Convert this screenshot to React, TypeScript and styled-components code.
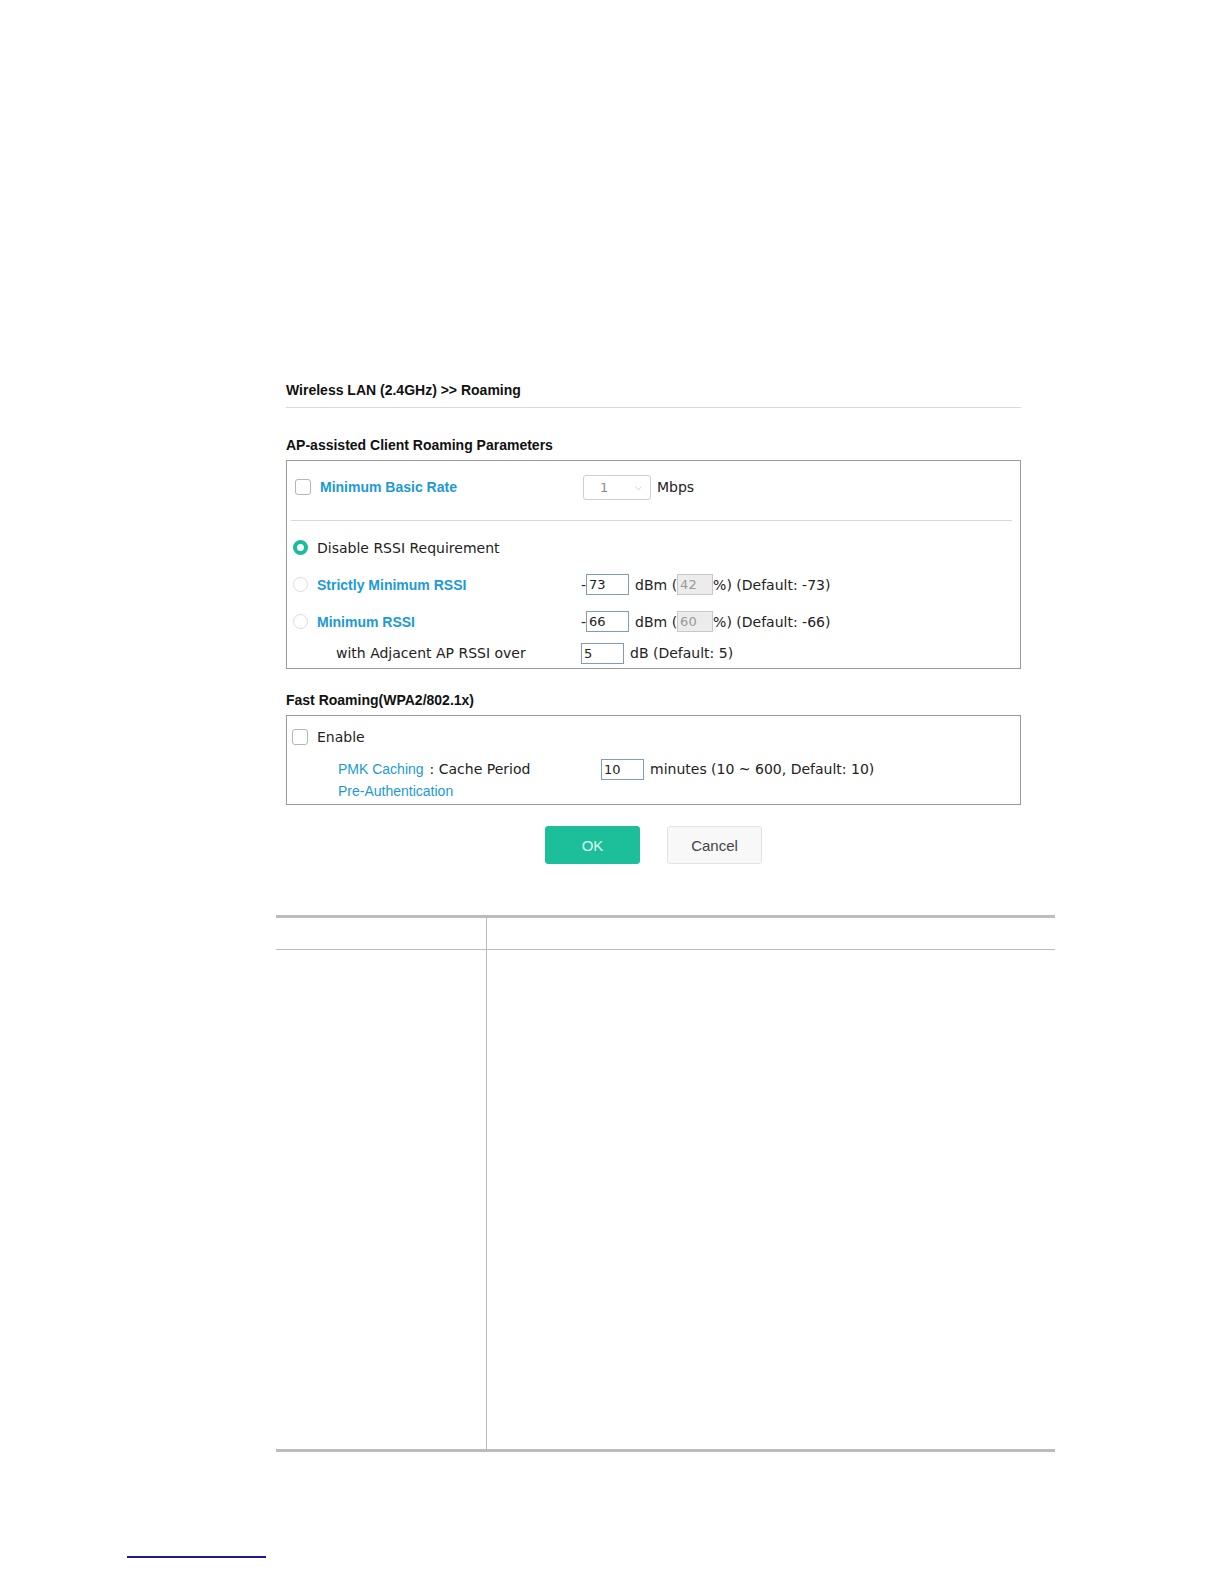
import React from 'react';
import styled, { createGlobalStyle } from 'styled-components';

const GlobalStyle = createGlobalStyle`
  body {
    margin: 0;
    background: #ffffff;
    font-family: "Liberation Sans", Arial, sans-serif;
    color: #222;
  }
`;

const Page = styled.div`
  width: 1224px;
  height: 1584px;
  padding: 380px 0 0 0;
  box-sizing: border-box;
  display: flex;
  flex-direction: column;
`;

const Panel = styled.div`
  margin-left: 286px;
  width: 735px;
  display: flex;
  flex-direction: column;
`;

const Title = styled.div`
  font-weight: bold;
  font-size: 14px;
  line-height: 20px;
  padding-bottom: 7px;
  border-bottom: 1px solid #d9d9d9;
  color: #111;
`;

const SectionTitle = styled.div<{ $top: number }>`
  font-weight: bold;
  font-size: 14px;
  line-height: 20px;
  margin-top: ${(p) => p.$top}px;
  margin-bottom: 5px;
  color: #111;
`;

const Box = styled.div<{ $height: number }>`
  border: 1px solid #9a9a9a;
  height: ${(p) => p.$height}px;
  box-sizing: border-box;
  display: flex;
  flex-direction: column;
`;

const Row = styled.div<{ $height: number; $indent?: number; $label?: number; $top?: number }>`
  display: grid;
  grid-template-columns: ${(p) => p.$label ?? 288}px 1fr;
  align-items: center;
  height: ${(p) => p.$height}px;
  margin-top: ${(p) => p.$top ?? 0}px;
  padding-left: ${(p) => p.$indent ?? 6}px;
`;

const LabelCell = styled.div<{ $pad?: number; $gap?: number }>`
  display: flex;
  align-items: center;
  gap: ${(p) => p.$gap ?? 9}px;
  padding-left: ${(p) => p.$pad ?? 0}px;
`;

const ValueCell = styled.div`
  display: flex;
  align-items: center;
  font-family: "DejaVu Sans", Verdana, sans-serif;
  font-size: 14px;
  color: #222;
`;

const Separator = styled.div`
  height: 1px;
  background: #d8d8d8;
  margin: 7px 8px 8px 4px;
`;

const Check = styled.span`
  width: 14px;
  height: 14px;
  border: 1px solid #b5b5b5;
  border-radius: 3px;
  background: #fff;
  flex-shrink: 0;
`;

const Radio = styled.span<{ $on?: boolean }>`
  width: ${(p) => (p.$on ? 7 : 13)}px;
  height: ${(p) => (p.$on ? 7 : 13)}px;
  border-radius: 50%;
  border: ${(p) => (p.$on ? '4px solid #1abc9c' : '1px solid #dcdcdc')};
  background: #fff;
  flex-shrink: 0;
`;

const BlueLabel = styled.span`
  color: #1b9ad6;
  font-weight: bold;
  font-size: 14px;
`;

const Text = styled.span`
  font-family: "DejaVu Sans", Verdana, sans-serif;
  font-size: 14px;
  color: #222;
`;

const LinkText = styled.span`
  color: #1b9ad6;
  font-size: 14px;
`;

const SelectBox = styled.div`
  width: 68px;
  height: 25px;
  border: 1px solid #cfcfcf;
  border-radius: 3px;
  box-sizing: border-box;
  display: flex;
  align-items: center;
  justify-content: space-between;
  padding: 0 8px 0 16px;
  color: #888;
  font-size: 13px;
  margin-right: 6px;
  font-family: "DejaVu Sans", Verdana, sans-serif;
`;

const Chevron = styled.span`
  font-size: 9px;
  color: #b0b0b0;
`;

const Field = styled.div<{ $width: number; $grey?: boolean }>`
  width: ${(p) => p.$width}px;
  height: 21px;
  box-sizing: border-box;
  border: 1px solid ${(p) => (p.$grey ? '#c8c8c8' : '#7f9db9')};
  background: ${(p) => (p.$grey ? '#ececec' : '#fff')};
  color: ${(p) => (p.$grey ? '#999' : '#222')};
  font-family: "DejaVu Sans", Verdana, sans-serif;
  font-size: 13px;
  line-height: 19px;
  padding-left: 2px;
  margin: 0 ${(p) => (p.$grey ? 0 : 6)}px 0 0;
`;

const Buttons = styled.div`
  display: flex;
  justify-content: center;
  gap: 27px;
  margin-top: 21px;
`;

const Button = styled.button<{ $primary?: boolean }>`
  width: 95px;
  height: 38px;
  border-radius: 3px;
  font-family: "Liberation Sans", Arial, sans-serif;
  font-size: 15px;
  border: 1px solid ${(p) => (p.$primary ? '#1dbf9b' : '#e2e2e2')};
  background: ${(p) => (p.$primary ? '#1dbf9b' : '#f8f8f8')};
  color: ${(p) => (p.$primary ? '#dff7f0' : '#444')};
  padding: 0;
`;

const Table = styled.div`
  margin: 51px 0 0 276px;
  width: 779px;
  border-top: 3px solid #bcbcbc;
  border-bottom: 3px solid #bcbcbc;
  display: grid;
  grid-template-columns: 211px 1fr;
  grid-template-rows: 32px 499px;
`;

const Cell = styled.div<{ $left?: boolean; $head?: boolean }>`
  border-right: ${(p) => (p.$left ? '1px solid #bcbcbc' : 'none')};
  border-bottom: ${(p) => (p.$head ? '1px solid #bcbcbc' : 'none')};
`;

const FootLine = styled.div`
  margin: 104px 0 0 127px;
  width: 139px;
  height: 2px;
  background: #1a1a9a;
`;

const App = () => {
  return (
    <Page>
      <GlobalStyle />
      <Panel>
        <Title>Wireless LAN (2.4GHz) &gt;&gt; Roaming</Title>
        <SectionTitle $top={27}>AP-assisted Client Roaming Parameters</SectionTitle>
        <Box $height={209}>
          <Row $height={52} $indent={8}>
            <LabelCell>
              <Check />
              <BlueLabel>Minimum Basic Rate</BlueLabel>
            </LabelCell>
            <ValueCell>
              <SelectBox>
                <span>1</span>
                <Chevron>⌵</Chevron>
              </SelectBox>
              Mbps
            </ValueCell>
          </Row>
          <Separator />
          <Row $height={37}>
            <LabelCell>
              <Radio $on />
              <Text>Disable RSSI Requirement</Text>
            </LabelCell>
          </Row>
          <Row $height={37}>
            <LabelCell>
              <Radio />
              <BlueLabel>Strictly Minimum RSSI</BlueLabel>
            </LabelCell>
            <ValueCell>
              -<Field $width={43}>73</Field>
              dBm (<Field $width={36} $grey>42</Field>
              %) (Default: -73)
            </ValueCell>
          </Row>
          <Row $height={37}>
            <LabelCell>
              <Radio />
              <BlueLabel>Minimum RSSI</BlueLabel>
            </LabelCell>
            <ValueCell>
              -<Field $width={43}>66</Field>
              dBm (<Field $width={36} $grey>60</Field>
              %) (Default: -66)
            </ValueCell>
          </Row>
          <Row $height={26}>
            <LabelCell $pad={43}>
              <Text>with Adjacent AP RSSI over</Text>
            </LabelCell>
            <ValueCell>
              <Field $width={43}>5</Field>
              dB (Default: 5)
            </ValueCell>
          </Row>
        </Box>
        <SectionTitle $top={21}>Fast Roaming(WPA2/802.1x)</SectionTitle>
        <Box $height={90}>
          <Row $height={22} $indent={5} $top={10}>
            <LabelCell>
              <Check />
              <Text>Enable</Text>
            </LabelCell>
          </Row>
          <Row $height={22} $indent={51} $label={263} $top={10}>
            <LabelCell $gap={6}>
              <LinkText>PMK Caching</LinkText>
              <Text>: Cache Period</Text>
            </LabelCell>
            <ValueCell>
              <Field $width={43}>10</Field>
              minutes (10 ~ 600, Default: 10)
            </ValueCell>
          </Row>
          <Row $height={22} $indent={51}>
            <LabelCell>
              <LinkText>Pre-Authentication</LinkText>
            </LabelCell>
          </Row>
        </Box>
        <Buttons>
          <Button $primary>OK</Button>
          <Button>Cancel</Button>
        </Buttons>
      </Panel>
      <Table>
        <Cell $left $head />
        <Cell $head />
        <Cell $left />
        <Cell />
      </Table>
      <FootLine />
    </Page>
  );
};

export default App;
